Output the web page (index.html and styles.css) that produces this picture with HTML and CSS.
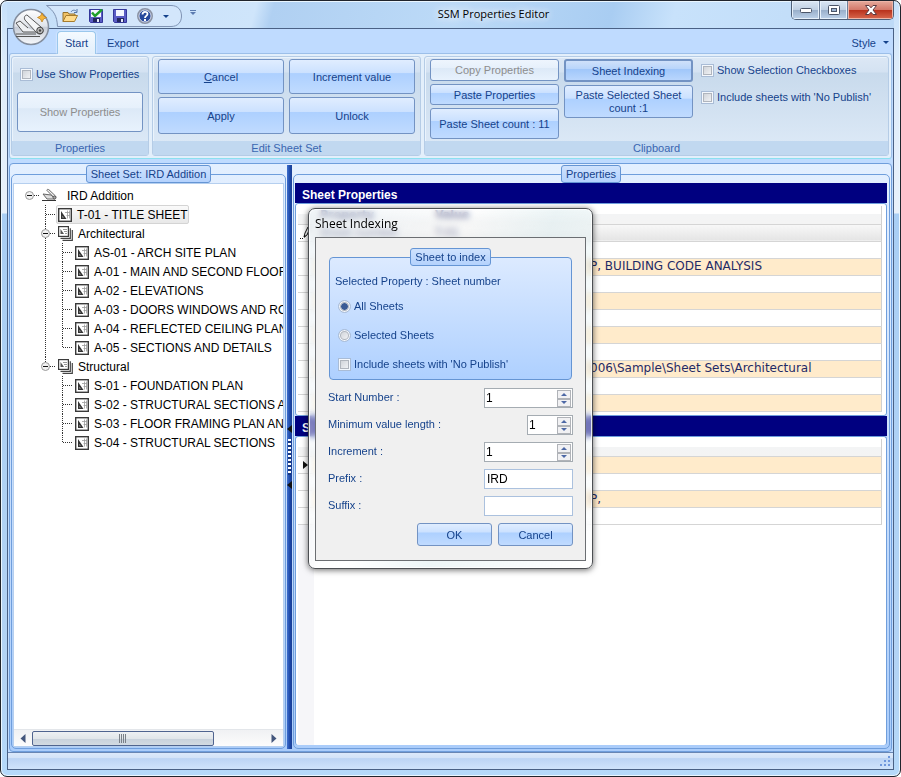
FILE: index.html
```html
<!DOCTYPE html>
<html lang="en">
<head>
    <meta charset="utf-8">
    <title>SSM Properties Editor</title>
    <link rel="stylesheet" href="styles.css">
</head>
<body>
<svg class="defs" aria-hidden="true">
    <symbol id="i-sheet" viewBox="0 0 14 14">
        <rect x=".7" y=".7" width="12.600" height="12.600" fill="#fff" stroke="#3a3a3a" stroke-width="1.400"/>
        <path d="M3 3v8h5.500z" fill="#333"/>
        <path d="M4.500 8v1.500h1.200z" fill="#fff"/>
        <path d="M7 4.500h5M9.500 2.500v8M8.500 7.500h3.500M11.500 2.500v8" stroke="#999" stroke-width=".8" fill="none"/>
    </symbol>
    <symbol id="i-set" viewBox="0 0 15 15">
        <path d="M14.300 4v10.300H4.500M12.300 2.300v10H2.500" stroke="#444" stroke-width="1.200" fill="none"/>
        <rect x=".6" y=".6" width="9.800" height="9.800" fill="#fff" stroke="#3a3a3a" stroke-width="1.200"/>
        <path d="M2.500 8V3l3.500 5z" fill="#555"/>
        <path d="M5 3.500h4M6 5.500h3M7 7.500h2" stroke="#999" fill="none"/>
    </symbol>
    <symbol id="i-root" viewBox="0 0 15 13">
        <path d="M0 11.500h14" stroke="#333"/>
        <path d="M1 5l4 5h8L9 6z" fill="#ddd" stroke="#666"/>
        <path d="M5 1.500l7 7c1 1 2.500 0 1.500-1.500L7 .8C6 0 4.500.5 5 1.500z" fill="#f4f4f4" stroke="#666"/>
        <circle cx="12.500" cy="8.500" r="1.500" fill="#aaa" stroke="#555"/>
    </symbol>
    <symbol id="i-minus" viewBox="0 0 9 9">
        <circle cx="4.500" cy="4.500" r="4" fill="#f2f2f2" stroke="#999"/>
        <path d="M2 4.500h5" stroke="#111"/>
    </symbol>
    <symbol id="i-disk" viewBox="0 0 14 14">
        <path d="M.5 .5h13v13h-12l-1-1z" fill="#5a5cc4" stroke="#34379a"/>
        <rect x="3" y="1" width="8" height="6" fill="#f4f6ff"/>
        <rect x="4" y="9" width="7" height="4" fill="#22265e"/>
        <rect x="8" y="10" width="2" height="3" fill="#e6e8fa"/>
    </symbol>
</svg>

<div class="window">
    <header class="titlebar">
        <div class="qat">
            <svg class="qat-shape" viewBox="0 0 136 22" preserveAspectRatio="none"><path d="M.5 .5H125C132 .5 135.500 5 135.500 11S132 21.500 125 21.500H11.500C11 11 8 6 .5 .5z" fill="#d3e6fb" stroke="#7f93b3"/></svg>
            <button class="qat-btn" aria-label="Open">
                <svg width="17" height="14" viewBox="0 0 17 14"><path d="M1 12.500V3.500h5l1 1.500h6v2" fill="#f0c267" stroke="#94702c"/><path d="M1 12.500L4 6.500h11.500l-3 6z" fill="#ffdb8b" stroke="#a67c2e"/><path d="M9 3c1-2 4-2.500 5.500-.5M15 0v3.500h-3" fill="none" stroke="#5577a8"/></svg>
            </button>
            <button class="qat-btn" aria-label="Save and apply">
                <svg width="14" height="14" viewBox="0 0 14 14"><use href="#i-disk"/><rect x="2" y="1" width="10" height="7" fill="#f4f6ff"/><path d="M3 3.500l3 3.500L13 .5" fill="none" stroke="#1fa02a" stroke-width="2.500"/></svg>
            </button>
            <button class="qat-btn" aria-label="Save">
                <svg width="14" height="14"><use href="#i-disk"/></svg>
            </button>
            <button class="qat-btn" aria-label="Help">
                <svg width="16" height="16" viewBox="0 0 16 16"><circle cx="8" cy="8" r="7" fill="#27489c" stroke="#8b93a5" stroke-width="2"/><circle cx="8" cy="8" r="6" fill="none" stroke="#e9eefb" stroke-width=".8"/><path d="M5.500 6.500c0-3.500 5-3.500 5-.5 0 2-2.500 1.800-2.500 4" fill="none" stroke="#fff" stroke-width="1.800"/><rect x="7" y="11" width="2" height="2" fill="#fff"/></svg>
            </button>
            <button class="qat-btn" aria-label="More"><span class="caret"></span></button>
        </div>
        <button class="overflow" aria-label="Customize toolbar"><span class="bar"></span><span class="caret"></span></button>
        <h1 class="title">SSM Properties Editor</h1>
        <div class="controls">
            <button class="ctl" aria-label="Minimize"><svg width="12" height="5"><rect x=".5" y=".5" width="11" height="4" rx="1" fill="#fff" stroke="#4b5568"/></svg></button>
            <button class="ctl" aria-label="Maximize"><svg width="12" height="10"><rect x=".5" y=".5" width="11" height="9" rx="1" fill="#fff" stroke="#4b5568"/><rect x="3.500" y="3.500" width="5" height="3" fill="#9db5d3" stroke="#4b5568"/></svg></button>
            <button class="ctl ctl-close" aria-label="Close"><svg width="12" height="10" viewBox="0 0 12 10"><path d="M.5 .5h3.500L6 2.800 8 .5h3.500L8 5l3.500 4.500H8L6 7.200 4 9.500H.5L4 5z" fill="#fff" stroke="#5c3a40"/></svg></button>
        </div>
    </header>
    <button class="orb" aria-label="Application menu">
        <svg width="38" height="38" viewBox="0 0 38 38">
            <defs><linearGradient id="g-orb" x1="0" y1="0" x2="0" y2="1"><stop offset="0" stop-color="#fff"/><stop offset=".48" stop-color="#dfe3ea"/><stop offset=".5" stop-color="#c6ccd6"/><stop offset="1" stop-color="#f7f9fc"/></linearGradient></defs>
            <circle cx="19" cy="19" r="17.500" fill="url(#g-orb)" stroke="#848e9e" stroke-width="1.500"/>
            <path d="M4 15l7 9h14M4 15l4-2 8 7" fill="#eef0f3" stroke="#555"/>
            <path d="M15 7l14 12c3 2 2.500 7-1 7-2 0-3-1-4-2L13 12c-1.500-2.500 0-5 2-5z" fill="#f4f5f7" stroke="#555"/>
            <circle cx="28" cy="22.500" r="3.300" fill="#bbb" stroke="#444"/>
            <circle cx="28" cy="22.500" r="1.200" fill="#444"/>
            <path d="M30 5l1.500 3 3 1.500-3 1.500L30 14l-1.500-3-3-1.500 3-1.500z" fill="#f6b53b" stroke="#b87a15" stroke-width=".7"/>
            <path d="M4 26h20M4 28.500h24" stroke="#555"/>
        </svg>
    </button>

    <div class="frame">
        <nav class="tabs">
            <button class="tab tab-active">Start</button>
            <button class="tab">Export</button>
            <button class="tab tab-style">Style <span class="caret"></span></button>
        </nav>

        <div class="ribbon">
            <section class="group group-props">
                <div class="group-body stack">
                    <label class="check check-tall"><input type="checkbox">Use Show Properties</label>
                    <button class="btn btn-show" disabled>Show Properties</button>
                </div>
                <h2 class="caption">Properties</h2>
            </section>
            <section class="group group-edit">
                <div class="group-body edit-grid">
                    <button class="btn"><span><u>C</u>ancel</span></button>
                    <button class="btn">Increment value</button>
                    <button class="btn">Apply</button>
                    <button class="btn">Unlock</button>
                </div>
                <h2 class="caption">Edit Sheet Set</h2>
            </section>
            <section class="group group-clip">
                <div class="group-body clip">
                    <div class="stack clip-col">
                        <button class="btn btn-small" disabled>Copy Properties</button>
                        <button class="btn btn-small">Paste Properties</button>
                        <button class="btn btn-tall">Paste Sheet count : 11</button>
                    </div>
                    <div class="stack clip-col">
                        <button class="btn btn-on">Sheet Indexing</button>
                        <button class="btn btn-two">Paste Selected Sheet count :1</button>
                    </div>
                    <div class="checks">
                        <label class="check"><input type="checkbox">Show Selection Checkboxes</label>
                        <label class="check"><input type="checkbox">Include sheets with 'No Publish'</label>
                    </div>
                </div>
                <h2 class="caption">Clipboard</h2>
            </section>
        </div>

        <main class="workspace">
            <fieldset class="box box-tree">
                <legend>Sheet Set: IRD Addition</legend>
                <div class="tree">
                    <div class="tree-view">
                        <div class="node root"><svg class="toggle"><use href="#i-minus"/></svg><i class="stub"></i><svg class="ico-set"><use href="#i-root"/></svg>IRD Addition</div>
                        <ul class="level">
                            <li><div class="node leaf"><i class="stub"></i><span class="item selected"><svg class="ico"><use href="#i-sheet"/></svg>T-01 - TITLE SHEET</span></div></li>
                            <li>
                                <div class="node"><svg class="toggle"><use href="#i-minus"/></svg><i class="stub"></i><svg class="ico-set"><use href="#i-set"/></svg>Architectural</div>
                                <ul class="level">
                                    <li><div class="node leaf"><i class="stub"></i><span class="item"><svg class="ico"><use href="#i-sheet"/></svg>AS-01 - ARCH SITE PLAN</span></div></li>
                                    <li><div class="node leaf"><i class="stub"></i><span class="item"><svg class="ico"><use href="#i-sheet"/></svg>A-01 - MAIN AND SECOND FLOOR</span></div></li>
                                    <li><div class="node leaf"><i class="stub"></i><span class="item"><svg class="ico"><use href="#i-sheet"/></svg>A-02 - ELEVATIONS</span></div></li>
                                    <li><div class="node leaf"><i class="stub"></i><span class="item"><svg class="ico"><use href="#i-sheet"/></svg>A-03 - DOORS WINDOWS AND RO</span></div></li>
                                    <li><div class="node leaf"><i class="stub"></i><span class="item"><svg class="ico"><use href="#i-sheet"/></svg>A-04 - REFLECTED CEILING PLAN</span></div></li>
                                    <li><div class="node leaf"><i class="stub"></i><span class="item"><svg class="ico"><use href="#i-sheet"/></svg>A-05 - SECTIONS AND DETAILS</span></div></li>
                                </ul>
                            </li>
                            <li>
                                <div class="node"><svg class="toggle"><use href="#i-minus"/></svg><i class="stub"></i><svg class="ico-set"><use href="#i-set"/></svg>Structural</div>
                                <ul class="level">
                                    <li><div class="node leaf"><i class="stub"></i><span class="item"><svg class="ico"><use href="#i-sheet"/></svg>S-01 - FOUNDATION PLAN</span></div></li>
                                    <li><div class="node leaf"><i class="stub"></i><span class="item"><svg class="ico"><use href="#i-sheet"/></svg>S-02 - STRUCTURAL SECTIONS A</span></div></li>
                                    <li><div class="node leaf"><i class="stub"></i><span class="item"><svg class="ico"><use href="#i-sheet"/></svg>S-03 - FLOOR FRAMING PLAN AN</span></div></li>
                                    <li><div class="node leaf"><i class="stub"></i><span class="item"><svg class="ico"><use href="#i-sheet"/></svg>S-04 - STRUCTURAL SECTIONS</span></div></li>
                                </ul>
                            </li>
                        </ul>
                    </div>
                    <div class="scrollbar">
                        <svg width="6" height="9"><path d="M5.500 0v9L.5 4.500z" fill="#44577d"/></svg>
                        <div class="track"><div class="thumb"><i></i></div></div>
                        <svg width="6" height="9"><path d="M.5 0v9l5-4.500z" fill="#44577d"/></svg>
                    </div>
                </div>
            </fieldset>

            <div class="splitter">
                <svg width="5" height="8"><path d="M5 0v8L0 4z" fill="#111"/></svg>
                <i class="dots"></i>
                <svg width="5" height="8"><path d="M5 0v8L0 4z" fill="#111"/></svg>
            </div>

            <fieldset class="box box-grid">
                <legend>Properties</legend>
                <div class="pane">
                    <h3 class="band">Sheet Properties</h3>
                    <div class="grid">
                        <table>
                            <thead><tr><th class="mark"></th><th class="prop">Property</th><th>Value</th></tr></thead>
                            <tbody>
                                <tr class="focused"><td class="mark"><svg width="10" height="14" viewBox="0 0 10 14"><path d="M4 11l1-4 3-6 2 1-3 7z" fill="#fff" stroke="#111"/><path d="M4 12l0-3 2 1z" fill="#111"/><path d="M0 12.500h1M2 12.500h1" stroke="#111"/></svg></td><td>Sheet number</td><td>T-01</td></tr>
                                <tr><td class="mark"></td><td></td><td></td></tr>
                                <tr class="odd"><td class="mark"></td><td></td><td class="tail">P, BUILDING CODE ANALYSIS</td></tr>
                                <tr><td class="mark"></td><td></td><td></td></tr>
                                <tr class="odd"><td class="mark"></td><td></td><td></td></tr>
                                <tr><td class="mark"></td><td></td><td></td></tr>
                                <tr class="odd"><td class="mark"></td><td></td><td></td></tr>
                                <tr><td class="mark"></td><td></td><td></td></tr>
                                <tr class="odd"><td class="mark"></td><td></td><td class="tail">006\Sample\Sheet Sets\Architectural</td></tr>
                                <tr><td class="mark"></td><td></td><td></td></tr>
                                <tr class="odd"><td class="mark"></td><td></td><td></td></tr>
                            </tbody>
                        </table>
                    </div>
                    <h3 class="band">S</h3>
                    <div class="grid grid-last">
                        <table>
                            <thead><tr><th class="mark"></th><th class="prop"></th><th></th></tr></thead>
                            <tbody>
                                <tr class="odd"><td class="mark"><svg width="5" height="8"><path d="M0 0v8l5-4z" fill="#111"/></svg></td><td></td><td></td></tr>
                                <tr><td class="mark"></td><td></td><td></td></tr>
                                <tr class="odd"><td class="mark"></td><td></td><td class="tail">P,</td></tr>
                                <tr><td class="mark"></td><td></td><td></td></tr>
                            </tbody>
                        </table>
                        <div class="gutter"></div>
                    </div>
                </div>
            </fieldset>
        </main>

        <footer class="status">
            <svg width="11" height="11"><path d="M8 0h2v2h-2zM4 4h2v2h-2zM8 4h2v2h-2zM0 8h2v2h-2zM4 8h2v2h-2zM8 8h2v2h-2z" fill="#6f97dc"/></svg>
        </footer>
    </div>

    <section class="dialog" role="dialog" aria-labelledby="dlg-title">
        <h2 class="dialog-title" id="dlg-title">Sheet Indexing</h2>
        <form class="client">
            <fieldset class="index-box">
                <legend>Sheet to index</legend>
                <p>Selected Property : Sheet number</p>
                <label class="check"><input type="radio" name="scope" checked>All Sheets</label>
                <label class="check"><input type="radio" name="scope">Selected Sheets</label>
                <label class="check"><input type="checkbox">Include sheets with 'No Publish'</label>
            </fieldset>
            <div class="fields">
                <div class="field">
                    <label for="start">Start Number :</label>
                    <div class="spin"><input id="start" type="number" value="1"><span class="spin-btns"><button type="button" aria-label="Up"><i class="up"></i></button><button type="button" aria-label="Down"><i class="down"></i></button></span></div>
                </div>
                <div class="field">
                    <label for="minlen">Minimum value length :</label>
                    <div class="spin spin-short"><input id="minlen" type="number" value="1"><span class="spin-btns"><button type="button" aria-label="Up"><i class="up"></i></button><button type="button" aria-label="Down"><i class="down"></i></button></span></div>
                </div>
                <div class="field">
                    <label for="inc">Increment :</label>
                    <div class="spin"><input id="inc" type="number" value="1"><span class="spin-btns"><button type="button" aria-label="Up"><i class="up"></i></button><button type="button" aria-label="Down"><i class="down"></i></button></span></div>
                </div>
                <div class="field">
                    <label for="prefix">Prefix :</label>
                    <input class="text" id="prefix" type="text" value="IRD">
                </div>
                <div class="field">
                    <label for="suffix">Suffix :</label>
                    <input class="text" id="suffix" type="text">
                </div>
            </div>
            <div class="actions">
                <button class="btn" type="button">OK</button>
                <button class="btn" type="button">Cancel</button>
            </div>
        </form>
    </section>
</div>
</body>
</html>
```
FILE: styles.css
```css
* {
    box-sizing: border-box;
}
html {
    background: #fff;
}
body {
    margin: 0;
    font-family: "Liberation Sans", Arial, sans-serif;
    font-size: 11px;
    color: #15428b;
}
button, input {
    font: inherit;
    color: inherit;
    margin: 0;
    padding: 0;
}
button {
    border: 0;
    background: none;
}
h1, h2, h3, p, ul {
    margin: 0;
    padding: 0;
    font-size: inherit;
    font-weight: normal;
}
svg {
    flex: none;
    display: block;
}
.defs {
    position: absolute;
    width: 0;
    height: 0;
}
.caret {
    border: 3px solid transparent;
    border-top-color: #15428b;
    border-bottom: 0;
}

/* window chrome */
.window {
    position: relative;
    display: flex;
    flex-direction: column;
    min-height: 100vh;
    padding: 0 6px 6px;
    border: 1px solid #20242c;
    border-radius: 7px;
    box-shadow: inset 0 0 0 1px #eaf6ff;
    background: linear-gradient(to bottom, #c6e0fa 0, #dcebfb 60px, #e9f1fb 212px, #a9cef5 213px, #b4d4f5 700px, #b5d9fa 100%);
}
.titlebar {
    display: flex;
    align-items: flex-start;
    height: 27px;
    background: linear-gradient(105deg, #c4def8 0, #cfe5fb 28%, #b0d0f2 30%, #bcdaf7 50%, #a9cdf2 68%, #c8e2fb 75%, #bedaf7 100%);
    box-shadow: 0 1px 0 #eaf6ff inset;
}
.qat {
    position: relative;
    display: flex;
    align-items: center;
    gap: 10px;
    width: 136px;
    height: 22px;
    margin: 4px 0 0 39px;
    padding-left: 16px;
}
.qat-shape {
    position: absolute;
    top: 0;
    left: 0;
    width: 100%;
    height: 100%;
}
.qat-btn {
    position: relative;
}
.qat .caret {
    display: block;
}
.overflow {
    display: flex;
    flex-direction: column;
    align-items: center;
    gap: 1px;
    margin: 9px 0 0 8px;
}
.overflow .bar {
    width: 6px;
    height: 1px;
    background: #5b7bb0;
}
.overflow .caret {
    border-top-color: #5b7bb0;
}
.title {
    flex: 1;
    padding-top: 4px;
    font: 11px/18px "Open Sans", "Noto Sans", sans-serif;
    text-align: center;
    color: #000;
    text-shadow: 0 0 8px #fff, 0 0 8px #fff;
}
.controls {
    display: flex;
    width: 103px;
    height: 19px;
    border: 1px solid #4f6078;
    border-top: 0;
    border-radius: 0 0 5px 5px;
    overflow: hidden;
}
.ctl {
    flex: 0 0 28px;
    display: flex;
    align-items: center;
    justify-content: center;
    border-right: 1px solid #6d7f99;
    background: linear-gradient(#dbe7f4, #c0d0e3 48%, #98aec9 50%, #bdd2ea);
    box-shadow: inset 0 0 0 1px #e6f0fa;
}
.ctl-close {
    flex: 1;
    border: 0;
    background: linear-gradient(#e6aa9c, #d4796a 48%, #b8301b 50%, #d8684e);
    box-shadow: inset 0 0 0 1px #eeb5a8;
}
.orb {
    position: absolute;
    top: 7px;
    left: 11px;
    z-index: 1;
}
.frame {
    flex: 1;
    display: flex;
    flex-direction: column;
    border: 1px solid #4a6185;
    background: #bfdbff;
}

/* tabs */
.tabs {
    display: flex;
    height: 24px;
    padding: 2px 4px 0 49px;
}
.tab {
    height: 23px;
    padding: 0 11px;
}
.tab-active {
    position: relative;
    width: 39px;
    padding: 0;
    border: 1px solid #9ac7ec;
    border-bottom: 0;
    border-radius: 4px 4px 0 0;
    background: linear-gradient(#f4faff, #e2effb);
    box-shadow: 0 0 2px #fff;
}
.tab-style {
    display: flex;
    align-items: center;
    gap: 7px;
    margin-left: auto;
    padding: 0;
}

/* ribbon */
.ribbon {
    display: flex;
    gap: 3px;
    margin: 0 1px;
    padding: 2px 2px 2px 1px;
    border: 1px solid #9cbfe9;
    border-bottom-color: #8be0ef;
    border-radius: 3px;
    background: #e3effb;
}
.group {
    display: flex;
    flex-direction: column;
    border: 1px solid #b5cce6;
    border-radius: 3px;
    background: linear-gradient(#dce8f5, #d4e2f2 15px, #c8daec 16px, #dbe8f6 85px);
    box-shadow: inset 1px 1px 0 #eaf3fc;
}
.group-props {
    flex: 0 0 138px;
}
.group-edit {
    flex: 0 0 269px;
}
.group-clip {
    flex: 1;
}
.group-body {
    height: 84px;
    padding: 2px 5px;
}
.caption {
    height: 14px;
    line-height: 15px;
    text-align: center;
    color: #3a66b0;
    background: #c1d8f0;
}
.stack {
    display: flex;
    flex-direction: column;
    gap: 3px;
}
.edit-grid {
    display: grid;
    grid-template-columns: 126px 126px;
    grid-template-rows: 35px 37px;
    gap: 3px 5px;
}
.clip {
    display: flex;
    gap: 5px;
}
.clip-col {
    width: 129px;
}
.checks {
    display: flex;
    flex-direction: column;
    gap: 5px;
    margin-left: 3px;
}
.btn {
    border: 1px solid #7393c3;
    border-radius: 3px;
    background: linear-gradient(#e0edff, #cbe1ff 40%, #add0ff 41%, #c0dbff);
    text-align: center;
}
.btn:disabled {
    color: #8d8d8d;
    background: linear-gradient(#eef5fd, #e6f0fb 40%, #dce9f7 41%, #e8f2fd);
}
.btn-show {
    height: 40px;
}
.btn-small {
    height: 22px;
}
.btn-tall {
    height: 31px;
}
.btn-two {
    height: 33px;
    padding: 0 8px;
    line-height: 13px;
}
.btn-on {
    height: 23px;
    border: 2px solid #7393c3;
    background: linear-gradient(#cfe1fa, #b9d5fb 40%, #9fc6fa 41%, #b9d6fd);
}
.check {
    display: flex;
    align-items: center;
    gap: 3px;
    height: 22px;
}
.check-tall {
    height: 30px;
    margin-left: 3px;
}
.check input {
    appearance: none;
    width: 13px;
    height: 13px;
    border: 1px solid #a9bcd6;
    background: linear-gradient(135deg, #c9cdd3, #f8f9fb);
    box-shadow: inset 0 0 0 1px #f4f8fd, inset 0 0 0 2px #b0b5bd;
}
.check input[type="radio"] {
    border-radius: 50%;
}
.check input[type="radio"]:checked {
    background: radial-gradient(circle, #3a5b95 0 3px, #e8edf5 4px);
}

/* workspace */
.workspace {
    flex: 1;
    display: flex;
    margin: 4px 1px 0;
    padding: 1px 1px 2px;
    border: 1px solid #6f9edc;
    border-radius: 4px;
    background: linear-gradient(#e3efff, #d2e4fc 40%, #aaccfa);
}
.box {
    display: flex;
    flex-direction: column;
    min-width: 0;
    margin: 0;
    padding: 0 1px 1px;
    border: 1px solid #6f9edc;
    border-radius: 5px;
}
.box-tree {
    flex: 0 0 275px;
}
.box-grid {
    flex: 1;
    padding: 0 2px 3px 1px;
}
legend {
    height: 18px;
    margin: 0 auto;
    padding: 0 4px;
    border: 1px solid #6595d4;
    border-radius: 3px;
    background: linear-gradient(#cfe2fd, #b4d2fd);
    line-height: 16px;
}
.tree {
    display: flex;
    flex-direction: column;
    height: 100%;
    border: 1px solid #b5cfef;
    background: #fff;
    overflow: hidden;
}
.tree-view {
    flex: 1;
    padding: 2px 0 0 11px;
    font-size: 12px;
    color: #000;
    white-space: nowrap;
    overflow: hidden;
}
.level {
    list-style: none;
    padding-left: 16px;
}
.level .level {
    padding-left: 17px;
}
/* dotted connector down the left of every branch */
.level > li {
    background: repeating-linear-gradient(#333 0 1px, transparent 1px 2px) 4px 0 / 1px 100% no-repeat;
}
.level > li:last-child {
    background-size: 1px 10px;
}
.node {
    display: flex;
    align-items: center;
    height: 19px;
}
.stub {
    flex: none;
    width: 5px;
    height: 1px;
    margin-right: 3px;
    background: repeating-linear-gradient(to right, #333 0 1px, transparent 1px 2px);
}
.leaf {
    padding-left: 5px;
}
.leaf .stub {
    width: 9px;
    margin-right: 1px;
}
.toggle {
    width: 9px;
    height: 9px;
}
.ico {
    width: 14px;
    height: 14px;
    margin-right: 5px;
}
.ico-set {
    width: 15px;
    height: 15px;
    margin-right: 5px;
}
.root .ico-set {
    margin-right: 10px;
}
.item {
    display: flex;
    align-items: center;
    height: 19px;
    padding: 0 1px;
    border: 1px solid transparent;
    border-radius: 2px;
}
.selected {
    border-color: #d4d4d4;
    background: linear-gradient(#fafafa, #e8e8e8);
}
.scrollbar {
    display: flex;
    align-items: center;
    gap: 6px;
    height: 17px;
    padding: 0 6px;
    border-top: 1px solid #e3e6ea;
    background: linear-gradient(#f0f1f3, #fcfcfc);
}
.track {
    flex: 1;
}
.thumb {
    display: flex;
    justify-content: center;
    align-items: center;
    width: 78%;
    height: 15px;
    border: 1px solid #50648f;
    border-radius: 2px;
    background: linear-gradient(#eef0f3, #e2e6ea 50%, #c8d1db 51%, #d2dae2);
}
.thumb i {
    width: 7px;
    height: 9px;
    background: repeating-linear-gradient(to right, #7a8088 0 1px, transparent 1px 2px);
}
.splitter {
    display: flex;
    flex-direction: column;
    align-items: center;
    justify-content: center;
    gap: 6px;
    width: 5px;
    margin: 0 1px;
    background: linear-gradient(to right, #3f70cf, #1c47a6 60%, #1a3f98);
}
.dots {
    width: 3px;
    height: 36px;
    background: repeating-linear-gradient(#fff 0 2px, #16387f 2px 4px);
}
.pane {
    display: flex;
    flex-direction: column;
    height: 100%;
}
.band {
    flex: none;
    height: 20px;
    padding: 0 7px;
    background: #000080;
    color: #fff;
    font-size: 12px;
    font-weight: bold;
    line-height: 24px;
}
.grid {
    padding: 2px 2px 3px;
    border: 1px solid #6f9edc;
    border-radius: 3px;
    background: #fff;
}
.grid-last {
    flex: 1;
    display: flex;
    flex-direction: column;
    padding-bottom: 0;
    border-bottom: 0;
}
table {
    width: calc(100% - 2px);
    border-collapse: collapse;
    table-layout: fixed;
    font-family: "DejaVu Sans", Verdana, sans-serif;
    color: #1f2a66;
}
th, td {
    height: 17px;
    padding: 0 6px;
    border: 0;
    border-bottom: 1px solid #d5d5d5;
    line-height: 15px;
    text-align: left;
    white-space: nowrap;
}
th {
    height: 18px;
    background: linear-gradient(#fff 45%, #f3f4f5 46%, #f4f4f4);
}
th:last-child, td:last-child {
    border-right: 1px solid #d0d0d0;
}
.mark {
    width: 16px;
    padding: 0 5px;
}
.prop {
    width: 115px;
}
.focused td {
    background: linear-gradient(#f8f8f8, #e4e4e4);
}
.focused .mark {
    background: #fff;
    padding: 0 2px;
}
.odd td {
    background: #ffebcb;
}
.odd .mark {
    background: #fff;
}
td.tail {
    padding-left: 161px;
    font-size: 12px;
}
.gutter {
    flex: 1;
    width: 16px;
    background: #f6f6f9;
}
.status {
    display: flex;
    justify-content: flex-end;
    align-items: flex-end;
    height: 17px;
    padding: 2px;
    border-top: 1px solid #6886b4;
    background: linear-gradient(#dce9fb, #d3e3f8 30%, #bcd4f4 35%, #d0e3fb);
}

/* sheet indexing dialog */
.dialog {
    position: absolute;
    top: 207px;
    left: 307px;
    width: 285px;
    padding: 0 6px 7px;
    border: 1px solid #4c4f53;
    border-radius: 7px;
    background: linear-gradient(110deg, rgba(232, 240, 244, .6), rgba(255, 255, 255, .4) 40%, rgba(226, 240, 242, .6) 60%, rgba(255, 255, 255, .4));
    backdrop-filter: blur(3px);
    box-shadow: inset 0 0 0 1px rgba(255, 255, 255, .8), 0 1px 6px rgba(0, 0, 0, .6);
}
.dialog-title {
    height: 28px;
    font: 12px/29px "Open Sans", "Noto Sans", sans-serif;
    color: #000;
}
.client {
    padding: 10px 12px 14px;
    border: 1px solid #6b6e72;
    background: #f0f0f0;
}
.index-box {
    display: flex;
    flex-direction: column;
    gap: 7px;
    height: 132px;
    margin: 0 1px;
    padding: 0 5px;
    border: 1px solid #6595d4;
    border-radius: 4px;
    background: linear-gradient(#dceaff, #aed0ff);
}
.index-box p {
    height: 14px;
    margin-top: 8px;
    line-height: 14px;
}
.index-box .check {
    margin-left: 3px;
}
.fields {
    display: flex;
    flex-direction: column;
    gap: 7px;
    margin-top: 8px;
}
.field {
    display: flex;
    justify-content: space-between;
}
.field label {
    line-height: 18px;
}
.spin {
    display: flex;
    width: 89px;
    height: 20px;
    border: 1px solid #a5acb2;
    background: #fff;
}
.spin-short {
    width: 46px;
}
.spin input {
    appearance: textfield;
    flex: 1;
    min-width: 0;
    padding: 0 1px;
    border: 0;
    background: none;
    font-size: 12px;
    color: #000;
}
.spin-btns {
    display: flex;
    flex-direction: column;
    width: 14px;
    padding-top: 1px;
    margin-right: 1px;
}
.spin-btns button {
    flex: 1;
    display: flex;
    align-items: center;
    justify-content: center;
    border: 1px solid #b0b3b8;
    background: #f1f1f3;
}
.up, .down {
    border: 3px solid transparent;
}
.up {
    border-top: 0;
    border-bottom-color: #4d68a5;
}
.down {
    border-bottom: 0;
    border-top-color: #4d68a5;
}
.text {
    width: 89px;
    height: 20px;
    padding: 0 2px;
    border: 1px solid #abc1de;
    background: #fff;
    font-size: 12px;
    color: #000;
}
.actions {
    display: flex;
    justify-content: flex-end;
    gap: 6px;
    margin-top: 7px;
}
.actions .btn {
    width: 75px;
    height: 23px;
}
```
